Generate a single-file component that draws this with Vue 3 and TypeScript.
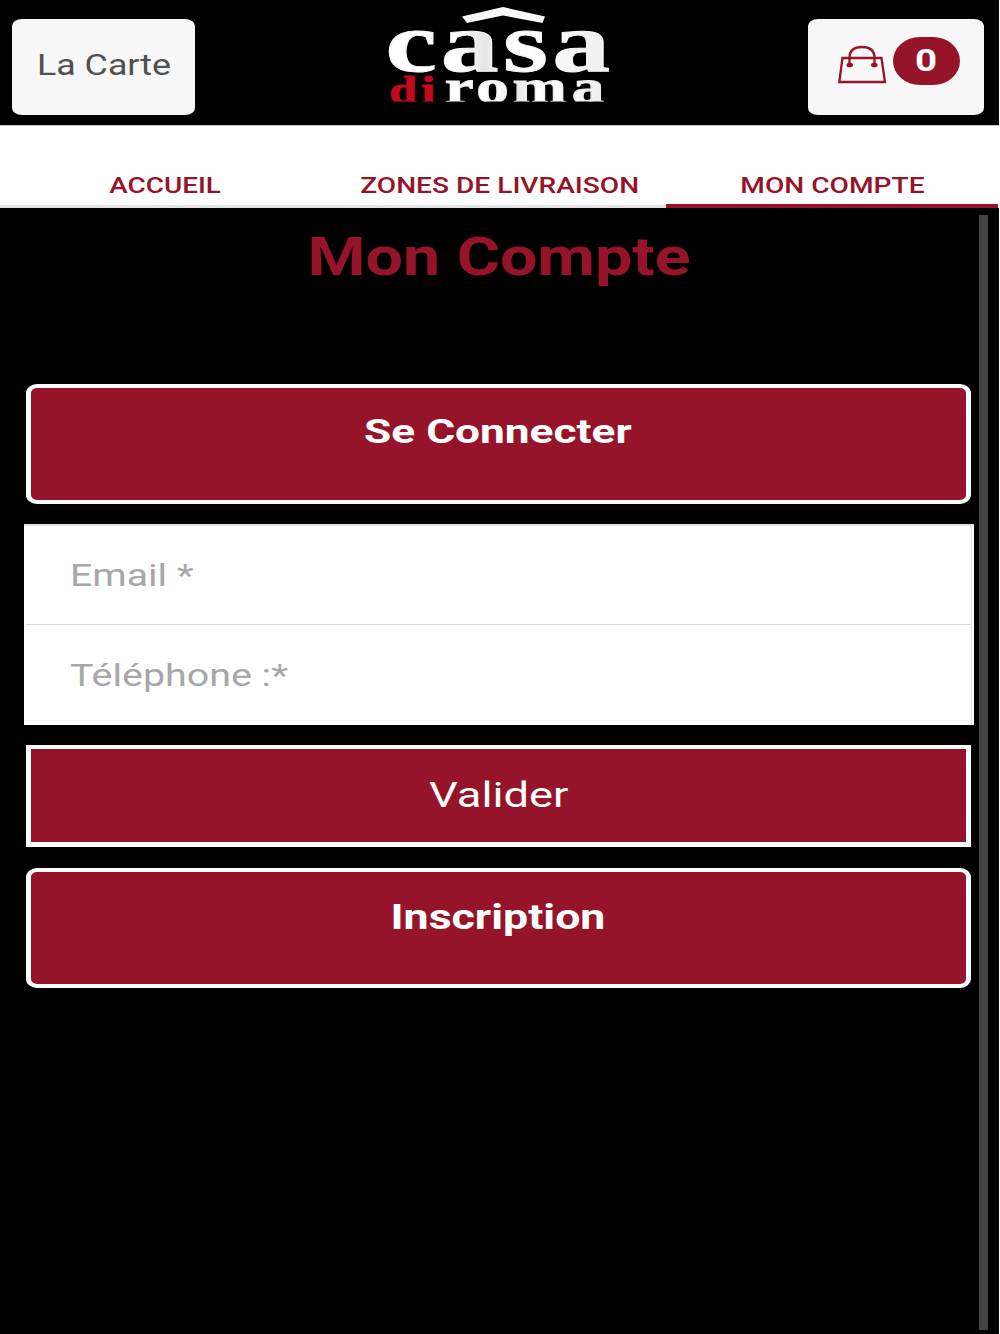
<script setup lang="ts">
import type { Directive } from 'vue'

interface Tab {
  label: string
  width: number
  active: boolean
}

interface Field {
  label: string
  width: number
}

const tabs: Tab[] = [
  { label: 'ACCUEIL', width: 111.5, active: false },
  { label: 'ZONES DE LIVRAISON', width: 278.5, active: false },
  { label: 'MON COMPTE', width: 184.5, active: true },
]

const fields: Field[] = [
  { label: 'Email *', width: 124 },
  { label: 'Téléphone :*', width: 218.5 },
]

// Widens a label horizontally until it spans the given number of pixels.
const vWide: Directive<HTMLElement, number> = (el, binding) => {
  el.style.transform = `scaleX(${binding.value / el.offsetWidth})`
}
</script>

<template>
  <div class="app">
    <header class="top">
      <button class="pill menu"><span v-wide="134.5" class="wide left">La Carte</span></button>
      <svg class="logo" width="240" height="110" viewBox="380 0 240 110" role="img" aria-label="casa di roma">
        <defs>
          <clipPath id="cut"><rect x="380" y="70" width="240" height="31.500" /></clipPath>
          <linearGradient id="shine" x1="0" x2="1" y1="0" y2="0">
            <stop offset="0" stop-color="#fff" />
            <stop offset=".32" stop-color="#fff" />
            <stop offset=".44" stop-color="#e6e6e6" />
            <stop offset=".58" stop-color="#fff" />
            <stop offset="1" stop-color="#eee" />
          </linearGradient>
        </defs>
        <path d="M463 16.500 504 7l42 9.500-2.500 6.500-39.500-7.500-36 7.500z" fill="#f8f8f8" />
        <g transform="translate(1 71) scale(1.36 1)">
          <text class="mark" x="283.500 324 369.800 406" y="0" font-size="85" fill="url(#shine)" stroke="#f6f6f6">casa</text>
        </g>
        <g clip-path="url(#cut)">
          <g transform="translate(1.500 103) scale(1.33 1)">
            <text class="mark" x="292.500 316.500" y="0" font-size="37" fill="#c20a1c" stroke="#c20a1c">di</text>
            <text class="mark" x="334 357.800 385 429.500" y="0" font-size="49" fill="url(#shine)" stroke="#eee">roma</text>
          </g>
        </g>
      </svg>
      <button class="pill cart">
        <svg class="bag" width="50" height="40" viewBox="0 0 50 40" fill="none" stroke="#951429">
          <path d="M4.500 14H43.500L47 38H1.300z" stroke-width="2.300" />
          <path d="M11.500 20V14C11.500 6 16.500 3 24 3S36.500 6 36.500 14v6" stroke-width="2.300" />
          <ellipse cx="11.700" cy="21" rx="3.300" ry="2.300" fill="#951429" stroke="none" />
          <ellipse cx="36.300" cy="21" rx="3.300" ry="2.300" fill="#951429" stroke="none" />
        </svg>
        <span class="badge"><span v-wide="22" class="wide">0</span></span>
      </button>
    </header>

    <nav class="tabs">
      <a v-for="tab in tabs" :key="tab.label" class="tab" :class="{ active: tab.active }">
        <span v-wide="tab.width" class="wide">{{ tab.label }}</span>
      </a>
    </nav>

    <main class="page">
      <section class="content">
        <h1><span v-wide="383" class="wide">Mon Compte</span></h1>
        <button class="action login"><span v-wide="268" class="wide">Se Connecter</span></button>
        <div class="fields">
          <div v-for="field in fields" :key="field.label" class="field">
            <span v-wide="field.width" class="wide left">{{ field.label }}</span>
          </div>
        </div>
        <button class="action submit"><span v-wide="139" class="wide">Valider</span></button>
        <button class="action signup"><span v-wide="215" class="wide">Inscription</span></button>
      </section>
      <div class="scrollbar"></div>
    </main>
  </div>
</template>

<style>
body {
  background: #fff;
}
</style>

<style scoped>
* {
  box-sizing: border-box;
}

.app {
  width: 998.5px;
  height: 1334px;
  overflow: hidden;
  display: flex;
  flex-direction: column;
  background: #000;
  font-family: Roboto, 'Liberation Sans', sans-serif;
}

button {
  margin: 0;
  font-family: inherit;
}

.wide {
  display: inline-block;
  white-space: nowrap;
}

.left {
  transform-origin: left center;
}

.top {
  height: 125px;
  flex: none;
  display: flex;
  justify-content: space-between;
  align-items: flex-start;
  padding: 0 14.500px 0 12px;
}

.pill {
  height: 96px;
  margin-top: 19px;
  padding: 0;
  border: 0;
  border-radius: 10px / 7px;
  background: #f7f7f7;
  display: flex;
  align-items: flex-start;
}

.menu {
  width: 182.500px;
  padding-left: 25px;
  color: #505050;
  font-size: 29px;
  line-height: 92px;
}

.logo {
  display: block;
  margin-left: -4.500px;
}

.mark {
  font-family: 'Liberation Serif', serif;
  font-weight: 700;
  stroke-width: 1;
}

.cart {
  width: 176.500px;
  padding-left: 30px;
  gap: 5.500px;
}

.bag {
  margin-top: 25px;
  flex: none;
}

.badge {
  width: 67px;
  height: 48px;
  margin-top: 18px;
  border-radius: 27px / 24px;
  background: #951429;
  color: #fff;
  font-size: 31.500px;
  font-weight: 700;
  line-height: 47px;
  text-align: center;
}

.tabs {
  height: 83px;
  flex: none;
  display: flex;
  background: #fff;
  border-top: 1px solid #c8c8c8;
}

.tab {
  width: 33.333%;
  padding-top: 39.500px;
  border-bottom: 3px solid #e4e4e4;
  color: #951429;
  font-size: 21.500px;
  font-weight: 500;
  line-height: 40px;
  text-align: center;
  height: 82px;
}

.tab:first-child {
  padding-right: 3px;
}

.tab.active {
  border-bottom: 4px solid #951429;
}

.page {
  flex: 1;
  display: flex;
  align-items: flex-start;
}

.content {
  width: 950px;
  margin-left: 24px;
  display: flex;
  flex-direction: column;
}

h1 {
  margin: 0;
  height: 175.500px;
  color: #951429;
  font-size: 53px;
  font-weight: 700;
  line-height: 98px;
  text-align: center;
}

.action {
  width: 945px;
  margin-left: 1.700px;
  padding: 0;
  display: flex;
  justify-content: center;
  align-items: flex-start;
  border: solid #fff;
  border-width: 4px 5px;
  background: #951429;
  color: #fff;
}

.login,
.signup {
  height: 120.500px;
  border-radius: 11px / 9px;
  font-weight: 700;
}

.login {
  font-size: 33px;
  line-height: 88px;
}

.signup {
  margin-top: 20.500px;
  font-size: 34.500px;
  line-height: 90px;
}

.fields {
  margin-top: 20px;
  height: 201px;
  background: #fff;
  border: solid #e2e2e2;
  border-width: 2px 0 0;
  padding: 0 2px 0 2px;
}

.field {
  height: 98px;
  padding-left: 44px;
  border-right: 1px solid #ddd;
  color: #a7a7a7;
  font-size: 31px;
  line-height: 100px;
}

.field + .field {
  height: 101px;
  border-top: 1px solid #d8d8d8;
  line-height: 101px;
}

.submit {
  margin-top: 20px;
  height: 102px;
  border-width: 4px 5px 5px;
  font-size: 35.500px;
  line-height: 93px;
}

.scrollbar {
  width: 8.500px;
  height: 1115px;
  margin: 7px 0 0 5px;
  background: #424242;
}
</style>
